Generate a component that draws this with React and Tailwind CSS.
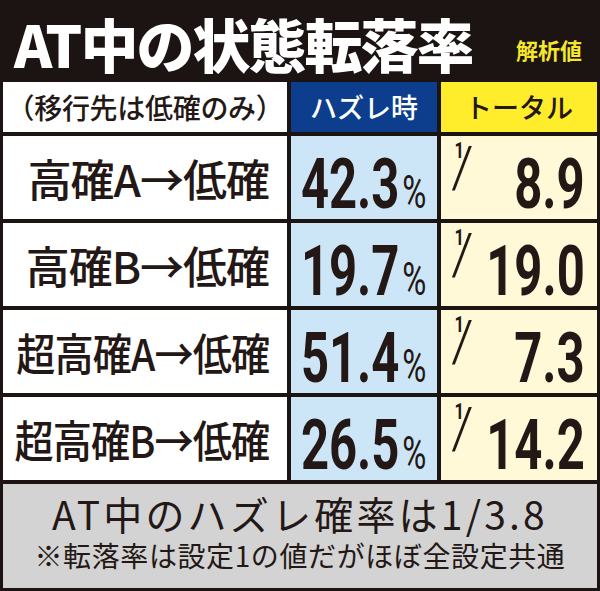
const jp = { fontFamily: '"Noto Sans CJK JP", "Noto Sans", sans-serif' };

const rows = [
  { label: '高確A→低確', rate: '42.3', total: '8.9', squeeze: false },
  { label: '高確B→低確', rate: '19.7', total: '19.0', squeeze: false },
  { label: '超高確A→低確', rate: '51.4', total: '7.3', squeeze: true },
  { label: '超高確B→低確', rate: '26.5', total: '14.2', squeeze: true },
];

const num = 'font-["Roboto",sans-serif] text-[#231815] leading-none';

function Fraction() {
  return (
    <div className="relative w-[40px] h-[60px] shrink-0 self-start">
      <span className={`absolute left-[12px] top-[4px] text-[22px] font-bold scale-x-[0.75] ${num}`}>1</span>
      <span className={`absolute left-[10px] top-[3px] text-[57px] font-light ${num}`}>/</span>
    </div>
  );
}

export default function App() {
  return (
    <div className="w-[600px] h-[591px] bg-[#1c1313] flex flex-col" style={jp}>
      {/* Title */}
      <div className="h-[82px] flex items-end justify-between pl-[14px] pr-[18px] pb-[10px]">
        <h1 className="text-[58px] font-black text-white leading-none tracking-[-2px]">AT中の状態転落率</h1>
        <span className="text-[22px] font-bold text-[#f5e62e] leading-none mb-[12px]">解析値</span>
      </div>

      {/* Table */}
      <div className="grid grid-cols-[284px_146px_156px] gap-[4px] px-[3px]">
        <div className="h-[50px] bg-white flex items-center justify-center text-[28px] font-medium text-[#231815] tracking-[-0.3px]">
          （移行先は低確のみ）
        </div>
        <div className="h-[50px] bg-[#0c3e8d] flex items-center justify-center text-[27px] font-medium text-white">
          ハズレ時
        </div>
        <div className="h-[50px] bg-[#ffec2a] flex items-center justify-center text-[27px] font-medium text-[#231815]">
          トータル
        </div>

        {rows.map((r) => (
          <div key={r.label} className="contents">
            <div className="h-[83px] min-w-0 bg-white flex items-center justify-end pr-[18px]">
              <span
                className={`inline-block shrink-0 origin-right whitespace-nowrap text-[44px] font-medium text-[#231815] tracking-[-1px] leading-none ${r.squeeze ? 'scale-x-[0.89]' : ''}`}
              >
                {r.label}
              </span>
            </div>
            <div className="h-[83px] bg-[#cde6f7] flex items-center justify-center">
              <span className={`inline-block whitespace-nowrap scale-x-[0.7] mt-[12px] text-[70px] font-bold ${num}`}>
                {r.rate}
                <span className="text-[47px] font-normal ml-[4px]">%</span>
              </span>
            </div>
            <div className="h-[83px] bg-[#fff9d8] flex items-center pr-[12px]">
              <Fraction />
              <div className="flex-1 min-w-0 flex justify-end">
                <span className={`inline-block shrink-0 whitespace-nowrap origin-right scale-x-[0.7] mt-[12px] text-[70px] font-bold ${num}`}>
                  {r.total}
                </span>
              </div>
            </div>
          </div>
        ))}
      </div>

      {/* Note */}
      <div className="mx-[3px] mt-[4px] h-[104px] bg-[#d3d3d3] flex flex-col items-center pt-[10px] text-[#231815]">
        <p className="text-[39px] leading-none tracking-[3.2px] whitespace-nowrap">AT中のハズレ確率は1/3.8</p>
        <p className="text-[28px] leading-none tracking-[0.6px] mt-[8px] whitespace-nowrap">※転落率は設定1の値だがほぼ全設定共通</p>
      </div>
    </div>
  );
}
